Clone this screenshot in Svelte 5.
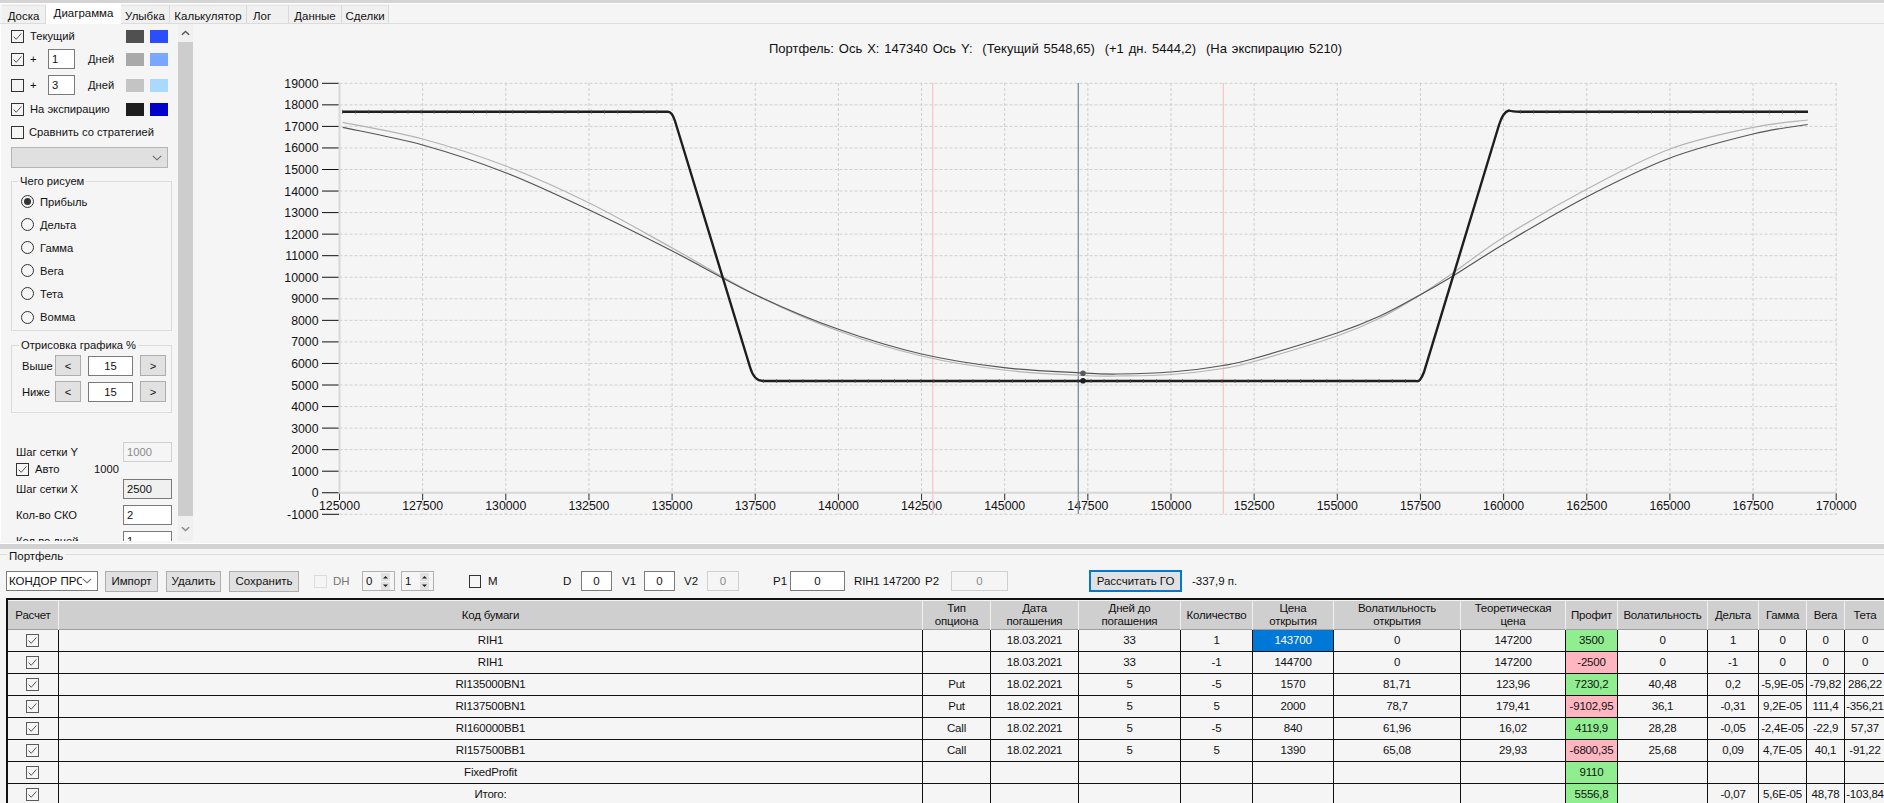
<script>
  const tabs = [
    { t: 'Доска', w: 44 }, { t: 'Диаграмма', w: 75, a: true }, { t: 'Улыбка', w: 49 },
    { t: 'Калькулятор', w: 77 }, { t: 'Лог', w: 42, left: true }, { t: 'Данные', w: 53 }, { t: 'Сделки', w: 47 }
  ];
  const radios = ['Прибыль', 'Дельта', 'Гамма', 'Вега', 'Тета', 'Вомма'];

  const X0 = 339.5, XS = 83.15, Y19 = 83.3, YS = 21.55;
  const yvals = Array.from({ length: 21 }, (_, i) => 19000 - i * 1000);
  const xvals = Array.from({ length: 19 }, (_, i) => 125000 + i * 2500);
  const yOf = (v) => Y19 + ((19000 - v) / 1000) * YS;
  const xOf = (i) => X0 + i * XS;

  function smooth(p) {
    let d = `M${p[0][0]},${p[0][1]}`;
    for (let i = 0; i < p.length - 1; i++) {
      const a = p[Math.max(i - 1, 0)], b = p[i], c = p[i + 1], e = p[Math.min(i + 2, p.length - 1)];
      const c1 = [b[0] + (c[0] - a[0]) / 6, b[1] + (c[1] - a[1]) / 6];
      const c2 = [c[0] - (e[0] - b[0]) / 6, c[1] - (e[1] - b[1]) / 6];
      d += ` C${c1[0].toFixed(1)},${c1[1].toFixed(1)} ${c2[0].toFixed(1)},${c2[1].toFixed(1)} ${c[0]},${c[1]}`;
    }
    return d;
  }
  const darkCurve = smooth([
    [342.7,127.3],[422.7,145],[505.7,172.7],[589.3,210],[672.3,251],[756,295],[838.5,329.3],
    [921.5,354],[1004,367.7],[1083,373],[1117,374],[1171,372],[1223,365.5],[1254,358.5],[1337,333],[1380,316],[1420,295],
    [1453,276],[1504,244],[1587,196.7],[1670,158],[1753,134],[1807.7,124.5]
  ]);
  const lightCurve = smooth([
    [342.7,122.3],[422.7,139],[505.7,166],[589.3,203],[672.3,248],[756,295],[838.5,331],
    [921.5,356],[1004,370],[1083,375.5],[1117,376],[1171,374.5],[1223,368.5],[1254,361.5],[1337,336],[1380,318],[1420,295],
    [1453,273],[1504,237],[1587,189],[1670,149],[1753,127.5],[1807.7,120]
  ]);
  const expiry = 'M342,111.7 H668 Q672,111.7 675,121 L750,367 Q754,381 763,381 H1416 Q1420,383 1424,372 L1499,125 Q1503,112 1509,110.5 Q1512,111.7 1520,111.7 H1808';

  const cols = [51, 864, 68, 88, 102, 72, 81, 127, 105, 52, 90, 51, 48, 38, 41];
  const head = [
    ['Расчет'], ['Код бумаги'], ['Тип', 'опциона'], ['Дата', 'погашения'], ['Дней до', 'погашения'], ['Количество'],
    ['Цена', 'открытия'], ['Волатильность', 'открытия'], ['Теоретическая', 'цена'], ['Профит'], ['Волатильность'],
    ['Дельта'], ['Гамма'], ['Вега'], ['Тета']
  ];
  const rows = [
    ['RIH1','','18.03.2021','33','1','143700','0','147200','3500','0','1','0','0','0'],
    ['RIH1','','18.03.2021','33','-1','144700','0','147200','-2500','0','-1','0','0','0'],
    ['RI135000BN1','Put','18.02.2021','5','-5','1570','81,71','123,96','7230,2','40,48','0,2','-5,9E-05','-79,82','286,22'],
    ['RI137500BN1','Put','18.02.2021','5','5','2000','78,7','179,41','-9102,95','36,1','-0,31','9,2E-05','111,4','-356,21'],
    ['RI160000BB1','Call','18.02.2021','5','-5','840','61,96','16,02','4119,9','28,28','-0,05','-2,4E-05','-22,9','57,37'],
    ['RI157500BB1','Call','18.02.2021','5','5','1390','65,08','29,93','-6800,35','25,68','0,09','4,7E-05','40,1','-91,22'],
    ['FixedProfit','','','','','','','','9110','','','','',''],
    ['Итого:','','','','','','','','5556,8','','-0,07','5,6E-05','48,78','-103,84']
  ];
  const cellClass = (r, c, v) => {
    if (r === 0 && c === 5) return 'sel';
    if (c === 8) return String(v).startsWith('-') ? 'loss' : 'gain';
    return '';
  };
</script>

{#snippet checkbox(on, cls = '')}
  <svg class="cb {cls}" viewBox="0 0 13 13" width="13" height="13" aria-hidden="true">
    <rect x="0.5" y="0.5" width="12" height="12" fill="#f5f5f5" />
    {#if on}<path d="M2.6 6.6 L5.2 9.3 L10.4 3.4" fill="none" stroke="#555" stroke-width="1" />{/if}
  </svg>
{/snippet}

{#snippet chevron()}
  <svg class="chev" viewBox="0 0 10 6" width="10" height="6" aria-hidden="true"><path d="M0.8 0.8 L5 4.8 L9.2 0.8" fill="none" stroke="#666" stroke-width="1.1" /></svg>
{/snippet}

{#snippet spinner(v, cls)}
  <div class="spin {cls}">
    <span class="spin-v">{v}</span>
    <span class="spin-b">
      <svg viewBox="0 0 9 17" width="9" height="17" aria-hidden="true">
        <rect width="9" height="8" fill="#e1e1e1" /><rect y="9" width="9" height="8" fill="#e1e1e1" />
        <path d="M2 5.5 L4.5 3 L7 5.5Z M2 11.5 L4.5 14 L7 11.5Z" fill="#222" />
      </svg>
    </span>
  </div>
{/snippet}

<div class="app">
  <div class="topband"></div>
  <div class="tabs">
    {#each tabs as tab}
      <div class="tab" class:active={tab.a} class:left={tab.left} style="width:{tab.w}px">{tab.t}</div>
    {/each}
  </div>

  <div class="main">
    <aside class="side">
      <div class="side-in">
        <div class="row r1">
          {@render checkbox(true)}<span class="lab lab-first">Текущий</span>
          <span class="swatches"><i class="sw c1"></i><i class="sw c2"></i></span>
        </div>
        <div class="row r2">
          {@render checkbox(true)}<span class="lab plus">+</span><span class="inp day">1</span><span class="lab days">Дней</span>
          <span class="swatches"><i class="sw c3"></i><i class="sw c4"></i></span>
        </div>
        <div class="row r3">
          {@render checkbox(false)}<span class="lab plus">+</span><span class="inp day">3</span><span class="lab days">Дней</span>
          <span class="swatches"><i class="sw c5"></i><i class="sw c6"></i></span>
        </div>
        <div class="row r4">
          {@render checkbox(true)}<span class="lab lab-first">На экспирацию</span>
          <span class="swatches"><i class="sw c7"></i><i class="sw c8"></i></span>
        </div>
        <div class="row r5">
          {@render checkbox(false)}<span class="lab lab-cmp">Сравнить со стратегией</span>
        </div>
        <div class="strategy">{@render chevron()}</div>

        <fieldset class="group g1">
          <legend>Чего рисуем</legend>
          {#each radios as r, i}
            <div class="radio">
              <svg viewBox="0 0 13 13" width="13" height="13" aria-hidden="true">
                <circle cx="6.5" cy="6.5" r="6" fill="none" stroke="#333" />
                {#if i === 0}<circle cx="6.5" cy="6.5" r="3.5" fill="#333" />{/if}
              </svg>
              <span>{r}</span>
            </div>
          {/each}
        </fieldset>

        <fieldset class="group g2">
          <legend>Отрисовка графика %</legend>
          <div class="adj adj1"><span class="adj-l">Выше</span><span class="btn sq">&lt;</span><span class="inp val">15</span><span class="btn sq">&gt;</span></div>
          <div class="adj adj2"><span class="adj-l">Ниже</span><span class="btn sq">&lt;</span><span class="inp val">15</span><span class="btn sq">&gt;</span></div>
        </fieldset>

        <div class="param p-y"><span>Шаг сетки Y</span><span class="inp num off">1000</span></div>
        <div class="auto">{@render checkbox(true)}<span class="auto-l">Авто</span><span class="auto-v">1000</span></div>
        <div class="param p-x"><span>Шаг сетки X</span><span class="inp num grey">2500</span></div>
        <div class="param p-s"><span>Кол-во СКО</span><span class="inp num">2</span></div>
        <div class="param p-d"><span>Кол во дней</span><span class="inp num">1</span></div>
      </div>
      <div class="scroll">
        <div class="arrow">
          <svg viewBox="0 0 10 6" width="9" height="6" aria-hidden="true"><path d="M1 5 L5 1.2 L9 5" fill="none" stroke="#555" stroke-width="1.6" /></svg>
        </div>
        <div class="thumb"></div>
        <div class="arrow down">
          <svg viewBox="0 0 10 6" width="9" height="6" aria-hidden="true"><path d="M1 1 L5 4.8 L9 1" fill="none" stroke="#888" stroke-width="1.6" /></svg>
        </div>
      </div>
    </aside>

    <svg class="chart" viewBox="193 24 1691 517" width="1691" height="517" role="img" aria-label="График портфеля">
      <text class="title" x="769" y="53" xml:space="preserve">Портфель: Ось X: 147340 Ось Y:  (Текущий 5548,65)  (+1 дн. 5444,2)  (На экспирацию 5210)</text>
      {#each yvals as v}
        <line class="grid" x1="339.5" x2="1836.5" y1={yOf(v)} y2={yOf(v)} />
        <line class="tick" x1="322" x2="339" y1={yOf(v)} y2={yOf(v)} />
        <text class="yl" x="318.5" y={yOf(v) + 4.5}>{v}</text>
      {/each}
      {#each xvals as v, i}
        {#if i > 0}<line class="grid" x1={xOf(i)} x2={xOf(i)} y1="83" y2="514" />{/if}
        <line class="xt" x1={xOf(i)} x2={xOf(i)} y1="493" y2="500" />
        <text class="xl" x={xOf(i)} y="510">{v}</text>
      {/each}
      <line class="axis" x1="339.5" x2="339.5" y1="83" y2="493" />
      <line class="axis" x1="339" x2="1836.5" y1="492.8" y2="492.8" />
      <line class="pink" x1="932.8" x2="932.8" y1="83" y2="514" />
      <line class="pink" x1="1223.3" x2="1223.3" y1="83" y2="514" />
      <line class="cursor" x1="1078.3" x2="1078.3" y1="83" y2="514" />
      <path class="c-light" d={lightCurve} />
      <path class="c-dark" d={darkCurve} />
      <path class="c-exp" d={expiry} />
      <line class="marks" x1="342" x2="668" y1="111.7" y2="111.7" />
      <line class="marks" x1="763" x2="1416" y1="381" y2="381" />
      <line class="marks" x1="1520" x2="1808" y1="111.7" y2="111.7" />
      <circle cx="1083" cy="373.3" r="2.8" fill="#5a5a5a" />
      <circle cx="1083" cy="380.7" r="2.8" fill="#1e1e1e" />
    </svg>
  </div>

  <div class="split-white"></div>
  <div class="split"></div>

  <section class="portfolio">
    <div class="pf-title"><span>Портфель</span></div>
    <div class="toolbar">
      <div class="combo"><span class="combo-t">КОНДОР ПРС</span>{@render chevron()}</div>
      <span class="btn b-imp">Импорт</span>
      <span class="btn b-del">Удалить</span>
      <span class="btn b-sav">Сохранить</span>
      <span class="dh-box"></span>
      <span class="tl dh">DH</span>
      {@render spinner(0, 's0')}
      {@render spinner(1, 's1')}
      <span class="m-box"></span>
      <span class="tl m">M</span>
      <span class="tl d">D</span>
      <span class="inp t-in i-d">0</span>
      <span class="tl v1">V1</span>
      <span class="inp t-in i-v1">0</span>
      <span class="tl v2">V2</span>
      <span class="inp t-in off i-v2">0</span>
      <span class="tl p1">P1</span>
      <span class="inp t-in i-p1">0</span>
      <span class="tl rih">RIH1 147200</span>
      <span class="tl p2">P2</span>
      <span class="inp t-in off i-p2">0</span>
      <span class="btn b-go">Рассчитать ГО</span>
      <span class="tl res">-337,9 п.</span>
    </div>

    <div class="table-wrap">
      <table>
        <colgroup>{#each cols as w}<col style="width:{w}px" />{/each}</colgroup>
        <thead>
          <tr>
            {#each head as h}
              <th>{#each h as line}<div>{line}</div>{/each}</th>
            {/each}
          </tr>
        </thead>
        <tbody>
          {#each rows as row, r}
            <tr>
              <td class="chk">{@render checkbox(true, 'tb')}</td>
              {#each row as v, c}
                <td class={cellClass(r, c, v)}>{v}</td>
              {/each}
            </tr>
          {/each}
        </tbody>
      </table>
    </div>
  </section>
</div>

<style>
  :global(body) { margin: 0; background: #f5f5f5; }
  .app {
    width: 1884px; height: 803px; overflow: hidden; display: flex; flex-direction: column;
    background: #f5f5f5; color: #111;
    font-family: "Liberation Sans", Arial, sans-serif; font-size: 11.5px; line-height: 14px;
  }
  .topband { height: 3px; background: #d4d4d4; border-bottom: 1px solid #fff; flex: none; }
  .tabs { height: 19px; padding-left: 2px; display: flex; align-items: flex-end; border-bottom: 1px solid #dcdcdc; flex: none; position: relative; }
  .tab {
    height: 18px; box-sizing: border-box; padding-top: 3px; text-align: center;
    background: #f0f0f0; border-right: 1px solid #d9d9d9; border-top: 1px solid #e4e4e4;
  }
  .tab.left { text-align: left; padding-left: 6px; }
  .tab.active { height: 20px; margin-bottom: -1px; padding-top: 2px; background: #fff; border: none; }

  .main { height: 517px; display: flex; flex: none; }
  .side { width: 193px; height: 517px; display: flex; flex: none; border-left: 1px solid #fff; box-sizing: border-box; overflow: hidden; }
  .side-in { width: 177px; box-sizing: border-box; padding: 2px 10px 0 10px; display: flex; flex-direction: column; flex: none; font-size: 11.2px; }

  .row { height: 20px; display: flex; align-items: center; flex: none; }
  .r2 { margin-top: 3px; }
  .r3 { margin-top: 6px; }
  .r4 { margin-top: 4px; }
  .r5 { margin-top: 3px; }
  .cb { flex: none; }
  .cb rect { stroke: #333; stroke-width: 1; }
  .cb.tb rect { stroke: #5a5a5a; }
  .lab-first { margin-left: 6px; }
  .lab-cmp { margin-left: 5px; white-space: nowrap; }
  .plus { margin-left: 6px; width: 18px; }
  .day { width: 27px; margin-left: 0; }
  .days { margin-left: 13px; }
  .swatches { margin-left: auto; display: flex; gap: 6px; }
  .sw { display: block; width: 18px; height: 13px; }
  .c1 { background: #505050; } .c2 { background: #2a4eff; }
  .c3 { background: #a9a9a9; } .c4 { background: #7aa7ff; }
  .c5 { background: #c4c4c4; } .c6 { background: #aad9ff; }
  .c7 { background: #1e1e1e; } .c8 { background: #0000c8; }

  .inp {
    display: block; box-sizing: border-box; height: 20px; line-height: 18px; padding: 0 3px;
    background: #fff; border: 1px solid #7a7a7a; flex: none;
  }
  .strategy {
    height: 21px; margin-top: 5px; box-sizing: border-box; background: #e0e0e0; border: 1px solid #b4b4b4;
    display: flex; align-items: center; justify-content: flex-end; padding-right: 5px; flex: none;
  }
  .chev { flex: none; }

  .group { margin: 0; padding: 0; box-sizing: border-box; width: 161px; border: 1px solid #dcdcdc; position: relative; flex: none; min-width: 0; }
  .group legend { margin-left: -3px; padding: 0 2px; font-size: 11.2px; line-height: 12px; }
  .g1 { height: 156px; margin-top: 7px; padding: 3px 0 0 9px; }
  .g2 { height: 74px; margin-top: 8px; padding: 4px 0 0 10px; }
  .radio { height: 23.1px; display: flex; align-items: center; gap: 6px; }
  .adj { display: flex; align-items: center; height: 21px; }
  .adj2 { margin-top: 5px; }
  .adj-l { width: 33px; }
  .btn {
    display: flex; align-items: center; justify-content: center; box-sizing: border-box;
    background: #e1e1e1; border: 1px solid #adadad; flex: none;
  }
  .sq { width: 26px; height: 21px; }
  .val { width: 45px; margin: 0 7px; text-align: center; }

  .param { display: flex; align-items: center; justify-content: space-between; padding-left: 5px; height: 20px; flex: none; }
  .num { width: 49px; margin-right: -4px; }
  .off { border-color: #cfcfcf; background: #f5f5f5; color: #8a8a8a; }
  .grey { background: #f0f0f0; }
  .p-y { margin-top: 29px; }
  .p-x { margin-top: 3px; }
  .p-s { margin-top: 6px; }
  .p-d { margin-top: 6px; }
  .auto { display: flex; align-items: center; height: 14px; padding-left: 5px; flex: none; }
  .auto-l { margin-left: 6px; width: 59px; }

  .scroll { width: 15px; display: flex; flex-direction: column; background: #f0f0f0; flex: none; }
  .arrow { height: 18px; display: flex; align-items: center; justify-content: center; flex: none; }
  .arrow.down { height: 25px; }
  .thumb { height: 474px; background: #cdcdcd; flex: none; }

  .chart { display: block; flex: none; background: #f5f5f5; }
  .chart text { font-family: "Liberation Sans", Arial, sans-serif; fill: #111; }
  .title { font-size: 13px; word-spacing: 1.3px; white-space: pre; }
  .yl { font-size: 12.3px; text-anchor: end; }
  .xl { font-size: 12.3px; text-anchor: middle; }
  .grid { stroke: #cfcfcf; stroke-width: 1; stroke-dasharray: 3 2; }
  .tick { stroke: #111; stroke-width: 1; }
  .xt { stroke: #333; stroke-width: 1; }
  .axis { stroke: #d8d8d8; stroke-width: 2; }
  .pink { stroke: #ffc0cb; stroke-width: 1.2; }
  .cursor { stroke: #7d8a99; stroke-width: 1.3; }
  .c-light { fill: none; stroke: #b4b4b4; stroke-width: 1.2; }
  .c-dark { fill: none; stroke: #555; stroke-width: 1.2; }
  .c-exp { fill: none; stroke: #1e1e1e; stroke-width: 2.4; }
  .marks { stroke: #555; stroke-width: 4; stroke-dasharray: 1 12.1; opacity: 0.7; }

  .split-white { height: 1px; margin-top: 2px; background: #fff; flex: none; }
  .split { height: 5px; background: #d2d2d2; flex: none; }

  .portfolio { flex: 1; min-height: 0; display: flex; flex-direction: column; }
  .pf-title { height: 14px; margin-top: 5px; border-top: 1px solid #dcdcdc; position: relative; flex: none; }
  .pf-title span { position: absolute; left: 7px; top: -5px; padding: 0 2px; background: #f5f5f5; line-height: 12px; }

  .toolbar { height: 24px; margin-top: 0; display: flex; align-items: center; flex: none; white-space: nowrap; }
  .combo {
    width: 92px; height: 20px; margin-left: 6px; box-sizing: border-box; background: #fff; border: 1px solid #7a7a7a;
    display: flex; align-items: center; padding: 0 5px 0 2px; flex: none;
  }
  .combo-t { width: 73px; overflow: hidden; flex: none; }
  .b-imp { width: 53px; height: 21px; margin-left: 7px; }
  .b-del { width: 55px; height: 21px; margin-left: 8px; }
  .b-sav { width: 70px; height: 21px; margin-left: 8px; }
  .dh-box { width: 13px; height: 13px; margin-left: 15px; box-sizing: border-box; border: 1px solid #dcdcdc; flex: none; }
  .tl { flex: none; }
  .dh { margin-left: 6px; width: 16px; color: #777; }
  .spin {
    width: 33px; height: 20px; box-sizing: border-box; border: 1px solid #b0b0b0; background: #f5f5f5;
    display: flex; align-items: center; justify-content: space-between; padding: 0 4px 0 3px; flex: none;
  }
  .s0 { margin-left: 13px; }
  .s1 { margin-left: 6px; }
  .spin-b { display: flex; }
  .m-box { width: 12px; height: 13px; margin-left: 35px; box-sizing: border-box; border: 1px solid #333; flex: none; }
  .m { margin-left: 7px; width: 10px; }
  .d { margin-left: 65px; width: 10px; }
  .t-in { text-align: center; }
  .i-d { width: 31px; margin-left: 8px; }
  .v1 { margin-left: 10px; width: 14px; }
  .i-v1 { width: 31px; margin-left: 8px; }
  .v2 { margin-left: 9px; width: 15px; }
  .i-v2 { width: 32px; margin-left: 8px; }
  .p1 { margin-left: 34px; width: 14px; }
  .i-p1 { width: 55px; margin-left: 3px; }
  .rih { margin-left: 9px; width: 64px; letter-spacing: -0.15px; }
  .p2 { margin-left: 7px; width: 14px; }
  .i-p2 { width: 57px; margin-left: 12px; }
  .b-go { width: 93px; height: 22px; margin-left: 81px; border: 2px solid #0078d7; }
  .res { margin-left: 10px; }

  .table-wrap { margin: 5px 0 0 6px; flex: none; width: 1878px; height: 210px; overflow: hidden; border-left: 2px solid #111; border-top: 2px solid #111; box-sizing: border-box; padding-top: 0; }
  table { table-layout: fixed; width: 1878px; border-collapse: separate; border-spacing: 0; font-size: 11.5px; letter-spacing: -0.2px; }
  th {
    height: 30px; box-sizing: border-box; padding: 0; font-weight: 400; background: #cfcfcf; text-align: center; line-height: 13px;
    border-right: 1px solid #f0f0f0; border-bottom: 1px solid #a0a0a0; border-top: 1px solid #f5f5f5;
  }
  td {
    height: 22px; box-sizing: border-box; padding: 0; text-align: center; line-height: 21px; white-space: nowrap; overflow: hidden;
    border-right: 1px solid #111; border-bottom: 1px solid #111;
  }
  td.chk .cb { display: block; margin: 0 auto; position: relative; left: -1px; }
  td.sel { background: #0078d7; color: #fff; }
  td.gain { background: #90ee90; }
  td.loss { background: #ffb6c1; }
</style>
